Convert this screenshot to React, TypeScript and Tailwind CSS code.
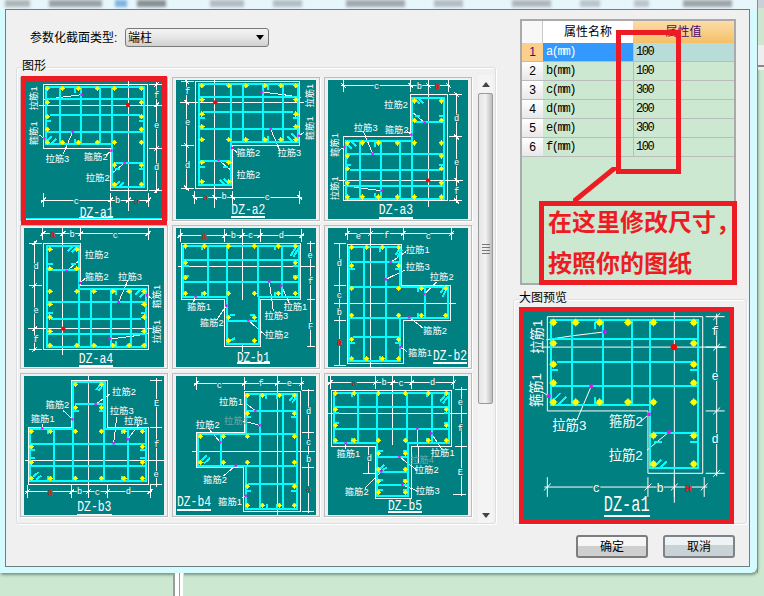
import React from "react";

type Lbl = [number, number, string, ("d" | "r" | "g" | "v")?];
type Geo = {
  outline: string;
  bars: string;
  yellow: [number, number[]][];
  mag: [number, number][];
  red?: [number, number];
  lines: string;
};

const hDim = (y: number, xs: number[]) =>
  `M${xs[0] - 6} ${y}H${xs[xs.length - 1] + 6}` +
  xs.map((x) => `M${x} ${y - 20}V${y + 20}M${x - 7} ${y + 7}L${x + 7} ${y - 7}`).join("");
const vDim = (x: number, ys: number[]) =>
  `M${x} ${ys[0] - 6}V${ys[ys.length - 1] + 6}` +
  ys.map((y) => `M${x - 22} ${y}H${x + 16}M${x - 7} ${y + 7}L${x + 7} ${y - 7}`).join("");

const L: Geo = {
  outline: "M130 253H442V572H332V445H130Z",
  bars:
    "M137 260H432V562H337V433H137ZM137 298H432M150 345H420M137 395H432M345 490H432M180 260V433M242 262V433M300 260V433M337 260V433" +
    "M226 278V266Q226 262 240 262M137 362H152M432 362H416M226 416V430H240M432 508H416M345 508H360M140 425L156 409M152 433L168 417M345 558L359 544M356 561L370 547",
  yellow: [
    [265, [142, 187, 235, 292, 343, 424]],
    [307, [142, 424]],
    [350, [142, 424]],
    [388, [142, 424]],
    [427, [142, 187, 235, 292, 343, 424]],
    [495, [343, 424]],
    [553, [343, 424]],
  ],
  mag: [[245, 284], [218, 395], [133, 415], [334, 452], [374, 488]],
  red: [384, 315],
  lines:
    "M385 235V632M118 315H490" +
    hDim(600, [130, 332, 385, 445]) +
    vDim(470, [253, 315, 445, 572]) +
    "M245 284L180 292L128 300M218 395L190 462M133 415L118 405M334 452L318 466M374 488L330 525",
};

const B1: Geo = {
  outline: "M545 55H902V222H782V364H673V222H545Z",
  bars:
    "M550 62H897V215H777V357H680V215H550ZM550 105H897M550 170H897M685 287H772M624 62V215M680 62V215M775 62V215M845 62V215" +
    "M605 62V76M825 62V76M550 122H566M550 152H566M880 122H897M880 152H897M605 200V215M825 200V215M690 270H705M750 270H765M872 92L888 66M880 95L896 70M685 350L705 340",
  yellow: [
    [63, [556, 613, 685, 763, 835, 886]],
    [113, [556, 886]],
    [158, [556, 886]],
    [205, [556, 613, 685, 763, 835, 886]],
    [277, [685, 763]],
    [347, [685, 763]],
  ],
  mag: [[587, 214], [679, 242], [745, 286], [808, 170], [844, 182]],
  lines:
    "M726 15V225M726 355V380M535 123H945" +
    hDim(32, [540, 674, 726, 780, 905]) +
    "M932 48V365M920 55H945M920 123H945M920 222H945M920 365H945" +
    "M587 214L580 232M679 242L650 285M745 286L795 330M808 170L820 258M844 182L868 235",
};

const B2: Geo = {
  outline: "M82 524H245V645H392V750H250V880H82Z",
  bars:
    "M88 530H240V650H385V745H240V874H88ZM88 577H240M88 650H240M88 743H240M100 800H240M132 530V874M198 530V874M315 650V745" +
    "M180 532V545M88 597H105M225 597H240M180 858V872M295 652V665M295 730V743M88 820H105M225 820H240M226 555L240 535M232 560L246 540M368 680L382 652M362 668L376 648",
  yellow: [
    [532, [95, 140, 187, 236]],
    [587, [95, 236]],
    [655, [95, 236, 304, 377]],
    [736, [95, 236, 304, 377]],
    [808, [95, 236]],
    [866, [95, 140, 187, 236]],
  ],
  mag: [[212, 577], [197, 628], [313, 673], [268, 742], [241, 832]],
  lines:
    "M151 474V890M44 700H408" +
    hDim(490, [82, 152, 250, 395]) +
    "M59 520V885M42 520H78M42 645H78M42 700H78M42 750H78M42 885H78" +
    "M212 577L258 545M197 628L255 600M313 673L350 635M268 742L310 775M241 832L262 845",
};

const B3: Geo = {
  outline: "M215 31H322V172H445V343H85V172H215Z",
  bars:
    "M220 37H316V177H437V332H90V177H220ZM225 103H316M90 222H437M90 287H437M163 177V332M218 177V332M312 37V332M383 177V332" +
    "M222 122H238M296 122H312M145 179V192M365 179V192M90 240H106M420 240H437M90 265H106M420 265H437M145 318V332M365 318V332M288 60L304 40M296 62L312 42M100 320L116 306M108 330L124 316",
  yellow: [
    [43, [226, 304]],
    [113, [226, 304]],
    [184, [94, 151, 226, 304, 372, 427]],
    [230, [94, 427]],
    [277, [94, 427]],
    [325, [94, 151, 226, 304, 372, 427]],
  ],
  mag: [[127, 175], [217, 148], [287, 103], [341, 220], [383, 208]],
  lines:
    "M265 18V385M75 271H492" +
    hDim(365, [82, 215, 265, 322, 450]) +
    "M470 24V350M450 31H486M450 172H486M450 271H486M450 343H486" +
    "M127 175L127 163M217 148L190 122M287 103L330 72M341 220L350 142M383 208L415 165",
};

const B4: Geo = {
  outline: "M732 65H900V424H730V293H590V187H732Z",
  bars:
    "M737 72H892V416H737V288H595V192H737ZM737 122H892M737 192H892M737 288H892M745 342H892M662 192V288M780 72V416M850 72V416" +
    "M797 72V88M832 72V88M737 142H752M874 142H892M800 402V416M830 402V416M874 362H892M737 362H752M868 92L886 72M876 98L892 80M605 270L620 256M612 280L630 264",
  yellow: [
    [76, [742, 787, 838, 883]],
    [130, [742, 883]],
    [199, [601, 670, 742, 883]],
    [277, [601, 670, 742, 883]],
    [349, [742, 883]],
    [406, [742, 787, 838, 883]],
  ],
  mag: [[766, 122], [779, 166], [661, 217], [707, 287], [737, 377]],
  lines:
    "M832 18V435M577 243H945" +
    hDim(40, [588, 732, 832, 905]) +
    "M925 56V430M906 62H942M906 187H942M906 243H942M906 293H942M906 425H942" +
    "M766 122L735 98M779 166L730 153M661 217L625 175M707 287L670 318M737 377L725 385",
};

const B5: Geo = {
  outline: "M35 62H395V228H275V385H166V228H35Z",
  bars:
    "M42 68H388V220H265V378H172V220H42ZM42 110H388M42 176H388M175 260H260M175 305H260M175 344H260M113 68V220M170 68V220M262 68V220M335 68V220" +
    "M95 68V82M320 68V82M42 128H58M372 128H388M42 158H58M372 158H388M95 205V220M320 205V220M175 244H190M248 244H262M175 330H190M248 330H262M175 360H190M248 360H262M360 95L380 70M368 100L386 78M180 296L192 284M188 300L200 292",
  yellow: [
    [70, [46, 102, 175, 256, 325, 379]],
    [118, [46, 379]],
    [166, [46, 379]],
    [211, [46, 102, 175, 256, 325, 379]],
    [250, [175, 256]],
    [298, [175, 256]],
    [334, [175, 256]],
    [367, [175, 256]],
  ],
  mag: [[77, 220], [184, 304], [238, 260], [292, 176], [334, 190], [247, 344]],
  lines:
    "M218 18V225M25 130H442" +
    hDim(38, [30, 166, 218, 275, 400]) +
    "M424 52V378M404 58H440M404 130H440M404 228H440M400 372H438M146 230V312M130 230H165M130 310H165" +
    "M77 220L77 238M184 304L135 355M238 260L290 300M292 176L296 280M334 190L365 238M247 344L290 362",
};

const stroke = { vectorEffect: "non-scaling-stroke" as const, shapeRendering: "crispEdges" as const, fill: "none" };

function Geometry({ g, t }: { g: Geo; t?: string }) {
  return (
    <g transform={t}>
      <path d={g.lines} stroke="#ffffff" strokeWidth={1} {...stroke} />
      <path d={g.outline} stroke="#ffffff" strokeWidth={1} {...stroke} />
      <path d={g.bars} stroke="#00ffff" strokeWidth={2} {...stroke} />
      {g.yellow.flatMap(([y, xs]) =>
        xs.map((x) => (
          <g key={`${x}-${y}`}>
            <circle cx={x} cy={y} r={6} fill="#ffff00" />
            <path d={`M${x - 8} ${y}H${x + 8}M${x} ${y - 8}V${y + 8}`} stroke="#ffff00" strokeWidth={1} {...stroke} />
          </g>
        ))
      )}
      {g.mag.map(([x, y]) => (
        <rect key={`${x}-${y}`} x={x - 3.5} y={y - 3.5} width={7} height={7} fill="#ff00ff" />
      ))}
      {g.red && <circle cx={g.red[0]} cy={g.red[1]} r={6.5} fill="#ff0000" />}
    </g>
  );
}

function Diagram({
  vb,
  geo,
  t,
  labels,
  title,
  size = 28,
  letter = 26,
  titleFont = 46,
  extra,
  className,
}: {
  vb: string;
  geo: Geo;
  t?: string;
  labels: Lbl[];
  title: [string, number, number, number, number, number];
  size?: number;
  letter?: number;
  titleFont?: number;
  extra?: React.ReactNode;
  className: string;
}) {
  const [name, cx, cy, u0, u1, uy] = title;
  const sx = (u1 - u0) / (titleFont * 3.0);
  return (
    <svg viewBox={vb} preserveAspectRatio="none" className={`block bg-[#008080] ${className}`}>
      <Geometry g={geo} t={t} />
      {labels.map(([x, y, s, k], i) => {
        const isDim = k === "d" || k === "r";
        const rotate = k === "v" ? `rotate(-90 ${x} ${y})` : undefined;
        return (
          <text
            key={i}
            x={x}
            y={y}
            transform={rotate}
            textAnchor="middle"
            dominantBaseline="central"
            fontSize={isDim ? letter : size}
            fill={k === "r" ? "#ff0000" : k === "g" ? "#6fa8a8" : "#ffffff"}
            stroke={isDim ? "#008080" : "none"}
            strokeWidth={isDim ? 6 : 0}
            paintOrder="stroke"
            className={
              isDim
                ? "font-['Liberation_Mono',monospace]"
                : "font-['Liberation_Sans','Noto_Sans_CJK_SC',sans-serif]"
            }
          >
            {s}
          </text>
        );
      })}
      <text
        transform={`translate(${cx} ${cy}) scale(${sx} 1)`}
        textAnchor="middle"
        dominantBaseline="central"
        fontSize={titleFont}
        fill="#ffffff"
        className="font-['Liberation_Mono',monospace]"
      >
        {name}
      </text>
      <path d={`M${u0} ${uy}H${u1}`} stroke="#ffffff" strokeWidth={2} {...stroke} />
      {extra}
    </svg>
  );
}

const thumb = "w-[140px] h-[139px]";
const cells: React.ComponentProps<typeof Diagram>[] = [
  {
    vb: "72 240 420 417",
    geo: L,
    className: thumb,
    title: ["DZ-a1", 290, 638, 238, 340, 655],
    extra: <path d="M78 656H486" stroke="#00ffff" strokeWidth={1} {...stroke} />,
    labels: [
      [103, 295, "拉筋1", "v"], [103, 400, "箍筋1", "v"], [172, 476, "拉筋3"], [287, 470, "箍筋2"], [293, 535, "拉筋2"],
      [470, 288, "f", "d"], [470, 378, "e", "d"], [470, 505, "d", "d"], [229, 605, "c", "d"], [353, 603, "b", "d"], [410, 605, "a", "r"],
    ],
  },
  {
    vb: "528 243 420 417",
    geo: L,
    t: "translate(1030,-5) scale(-1,1)",
    className: thumb,
    title: ["DZ-a2", 745, 632, 693, 795, 654],
    labels: [
      [930, 290, "拉筋1", "v"], [930, 388, "箍筋1", "v"], [745, 461, "箍筋2"], [868, 461, "拉筋3"], [745, 527, "拉筋2"],
      [563, 280, "f", "d"], [563, 372, "e", "d"], [563, 500, "d", "d"], [617, 598, "a", "r"], [672, 595, "b", "d"], [802, 597, "c", "d"],
    ],
  },
  {
    vb: "24 30 420 417",
    geo: L,
    t: "translate(-60,646) scale(1,-1)",
    className: thumb,
    title: ["DZ-a3", 228, 421, 177, 280, 443],
    labels: [
      [228, 105, "拉筋2"], [230, 180, "箍筋2"], [137, 175, "拉筋3"], [45, 225, "箍筋1", "v"], [45, 355, "拉筋1", "v"],
      [170, 52, "c", "d"], [298, 52, "b", "d"], [352, 50, "a", "r"], [410, 147, "d", "d"], [410, 280, "e", "d"], [410, 367, "f", "d"],
    ],
  },
  {
    vb: "72 9 420 417",
    geo: L,
    t: "translate(574,626) scale(-1,-1)",
    className: thumb,
    title: ["DZ-a4", 288, 401, 237, 340, 423],
    labels: [
      [290, 90, "拉筋2"], [290, 155, "箍筋2"], [390, 155, "拉筋3"], [470, 215, "箍筋1", "v"], [470, 320, "拉筋1", "v"],
      [158, 30, "a", "r"], [216, 31, "b", "d"], [346, 32, "c", "d"], [108, 125, "d", "d"], [108, 258, "e", "d"], [108, 345, "f", "d"],
    ],
  },
  {
    vb: "528 9 420 417",
    geo: B1,
    className: thumb,
    title: ["DZ-b1", 760, 398, 712, 810, 414],
    labels: [
      [597, 245, "箍筋1"], [635, 293, "箍筋2"], [829, 272, "拉筋3"], [830, 331, "拉筋2"], [886, 245, "拉筋1"],
      [612, 35, "a", "r"], [700, 33, "b", "d"], [752, 33, "c", "d"], [844, 33, "d", "d"], [930, 93, "e", "d"], [932, 172, "f", "d"], [932, 305, "F", "d"],
    ],
  },
  {
    vb: "24 474 420 417",
    geo: B2,
    className: thumb,
    title: ["DZ-b2", 390, 858, 340, 442, 878],
    labels: [
      [293, 540, "拉筋1"], [293, 592, "拉筋3"], [365, 620, "拉筋2"], [345, 782, "箍筋2"], [300, 848, "箍筋1"],
      [115, 500, "e", "d"], [200, 497, "f", "d"], [325, 502, "c", "d"], [58, 582, "d", "d"], [58, 678, "c", "d"], [58, 730, "b", "d"], [58, 818, "a", "r"],
    ],
  },
  {
    vb: "72 18 420 417",
    geo: B3,
    className: thumb,
    title: ["DZ-b3", 283, 411, 232, 335, 434],
    labels: [
      [128, 147, "箍筋1"], [172, 104, "箍筋2"], [372, 66, "拉筋2"], [365, 122, "拉筋3"], [408, 152, "拉筋1"],
      [150, 369, "a", "r"], [239, 367, "b", "d"], [292, 369, "c", "d"], [385, 367, "d", "d"], [470, 103, "E", "d"], [470, 225, "f", "d"], [468, 316, "e", "d"],
    ],
  },
  {
    vb: "528 18 420 417",
    geo: B4,
    className: thumb,
    title: ["DZ-b4", 582, 396, 532, 634, 420],
    labels: [
      [693, 96, "拉筋1"], [708, 153, "拉筋3", "g"], [623, 164, "拉筋2"], [645, 329, "箍筋2"], [690, 395, "箍筋1"],
      [658, 47, "c", "d"], [783, 41, "f", "d"], [868, 41, "e", "d"], [926, 125, "d", "d"], [926, 220, "c", "d"], [926, 270, "b", "d"], [925, 360, "a", "r"],
    ],
  },
  {
    vb: "24 18 420 417",
    geo: B5,
    className: thumb,
    title: ["DZ-b5", 255, 407, 204, 306, 426],
    labels: [
      [85, 251, "箍筋1"], [110, 367, "箍筋2"], [306, 270, "拉筋4", "g"], [320, 301, "拉筋2"], [323, 362, "拉筋3"], [368, 250, "拉筋1"],
      [102, 41, "a", "r"], [192, 40, "b", "d"], [243, 41, "c", "d"], [338, 38, "d", "d"], [421, 98, "e", "d"], [421, 178, "f", "d"], [421, 310, "E", "d"], [148, 268, "d", "d"],
    ],
  },
];

const blobs: [number, number, string][] = [
  [5, 25, "#aeb6ba"], [19, 53, "#9aa2a6"], [13, 12, "#7db4e0"], [10, 29, "#8a9094"], [44, 34, "#b4bcc2"], [29, 29, "#b4bec6"],
  [44, 59, "#a2a8ae"], [29, 29, "#b4bcc4"], [49, 39, "#b0b6bc"], [29, 20, "#bcc4ca"], [34, 15, "#bcc4ca"], [34, 49, "#a0a6aa"],
];

const rows: [string, string][] = [
  ["b(mm)", "100"], ["c(mm)", "300"], ["d(mm)", "200"], ["e(mm)", "300"], ["f(mm)", "100"],
];

const mono = "font-['Liberation_Mono','Noto_Sans_CJK_SC',monospace] text-[12px] tracking-[-1.4px]";

function GroupBox({ label, className, children }: { label: string; className: string; children: React.ReactNode }) {
  return (
    <div className={`relative rounded-[3px] border border-[#d9e0e5] shadow-[inset_1px_1px_0_#ffffff,1px_1px_0_#ffffff] ${className}`}>
      <span className="absolute left-[5px] -top-[9px] bg-[#f0f0f0] pr-px text-[12px] leading-[14px] text-black">{label}</span>
      {children}
    </div>
  );
}

export default function App() {
  return (
    <div className="flex h-[596px] w-[764px] flex-col overflow-hidden bg-[#cde8d0] font-['Liberation_Sans','Noto_Sans_CJK_SC',sans-serif] text-black">
      <div className="flex h-[573px] w-[764px]">
        {/* window frame */}
        <div className="flex h-[573px] w-[757px] flex-col rounded-br-[6px] bg-[#d4fbff] pb-[6px] pl-[5px] pr-[7px] shadow-[1px_2px_3px_rgba(60,80,60,0.55)]">
          <div className="-ml-[5px] -mr-[7px] flex h-[9px] shrink-0 overflow-hidden bg-[#e6f6fb]">
            {blobs.map(([gap, w, c], i) => (
              <React.Fragment key={i}>
                <div className="shrink-0" style={{ width: gap }} />
                <div className="h-[7px] shrink-0 blur-[1.5px]" style={{ width: w, backgroundColor: c }} />
              </React.Fragment>
            ))}
          </div>
          {/* client area */}
          <div className="flex min-h-0 flex-1 border border-[#6f7f7f] bg-[#f0f0f0]">
            {/* left column */}
            <div className="ml-[10px] flex w-[480px] shrink-0 flex-col">
              <div className="ml-[14px] mt-[18px] flex h-[19px] items-center">
                <span className="w-[95px] text-[12px]">参数化截面类型:</span>
                <div className="flex h-[19px] w-[144px] items-center justify-between rounded-[3px] border border-[#7a7a7a] bg-gradient-to-b from-[#f4f4f4] via-[#e6e6e6] to-[#cfcfcf] pl-[2px] pr-[4px] text-[12px]">
                  <span>端柱</span>
                  <svg viewBox="0 0 8 5" className="h-[5px] w-[8px]"><path d="M0 0H8L4 5Z" fill="#000" /></svg>
                </div>
              </div>
              <GroupBox label="图形" className="mt-[20px] h-[457px] w-[480px]">
                <div className="flex items-start pl-[3px] pt-[9px]">
                  <div className="grid w-[452px] grid-cols-[148px_148px_148px] gap-[4px]">
                    {cells.map((c, i) => (
                      <div key={i} className="relative h-[144px] border border-[#bcbcbc] bg-[#f0f0f0] pb-px pl-[3px] pr-[3px] pt-[2px] shadow-[1px_1px_0_#ffffff]">
                        <Diagram {...c} />
                        {i === 0 && (
                          <div className="absolute -top-[2px] left-0 h-[149px] w-[146px] border-[5px] border-[#ed1c24]" />
                        )}
                      </div>
                    ))}
                  </div>
                  <div className="-mt-[2px] ml-[6px] flex h-[448px] w-[15px] flex-col bg-[#f4f4f4]">
                    <div className="flex h-[18px] items-center justify-center">
                      <svg viewBox="0 0 8 5" className="h-[5px] w-[8px]"><path d="M0 5H8L4 0Z" fill="#444" /></svg>
                    </div>
                    <div className="flex h-[311px] flex-col items-center justify-center gap-[2px] rounded-[2px] border border-[#9a9a9a] bg-gradient-to-r from-[#e4e4e4] via-[#f2f2f2] to-[#bcbcbc]">
                      <div className="h-px w-[8px] bg-[#777]" />
                      <div className="h-px w-[8px] bg-[#777]" />
                      <div className="h-px w-[8px] bg-[#777]" />
                      <div className="h-px w-[8px] bg-[#777]" />
                    </div>
                    <div className="flex-1" />
                    <div className="flex h-[16px] items-center justify-center">
                      <svg viewBox="0 0 8 5" className="h-[5px] w-[8px]"><path d="M0 0H8L4 5Z" fill="#444" /></svg>
                    </div>
                  </div>
                </div>
              </GroupBox>
            </div>

            {/* right column */}
            <div className="ml-[17px] flex w-[234px] shrink-0 flex-col">
              <div className="relative ml-[7px] mt-[9px] h-[266px] w-[216px] border-2 border-[#aaaaaa] bg-[#cde8d0]">
                <div className="grid grid-cols-[21px_90px_101px] grid-rows-[22px_19px_19px_19px_19px_19px_19px] text-[12px]">
                  <div className="border-r border-[#c8c8c8] bg-[#f8f8f8]" />
                  <div className="flex items-center justify-center bg-white">属性名称</div>
                  <div className="flex items-center justify-center bg-gradient-to-b from-[#fcdca8] to-[#f4c064] text-[#4b0a6e]">属性值</div>
                  <div className="flex items-center justify-center border-b border-[#bbbbbb] bg-[#fcd08c] text-[#4b0a6e]">1</div>
                  <div className="flex items-center border-b border-[#bbbbbb] bg-[#3399ff] pl-[3px] text-white"><span className={mono}>a(mm)</span></div>
                  <div className="flex items-center border-b border-l border-[#bbbbbb] bg-[#b8ddd8] pl-[2px]"><span className={mono}>100</span></div>
                  {rows.map(([name, value], i) => (
                    <React.Fragment key={name}>
                      <div className="flex items-center justify-center border-b border-[#bbbbbb] bg-gradient-to-b from-white to-[#e8e8e8]">{i + 2}</div>
                      <div className="flex items-center border-b border-[#bbbbbb] pl-[3px]"><span className={mono}>{name}</span></div>
                      <div className="flex items-center border-b border-l border-[#bbbbbb] pl-[2px]"><span className={mono}>{value}</span></div>
                    </React.Fragment>
                  ))}
                </div>
                {/* red annotations */}
                <div className="absolute left-[94px] top-[9px] h-[144px] w-[65px] border-[5px] border-[#ed1c24]" />
                <svg viewBox="0 0 43 35" className="absolute left-[51px] top-[146px] h-[35px] w-[43px]">
                  <path d="M43 0L0 35" stroke="#ed1c24" strokeWidth={5} fill="none" />
                </svg>
                <div className="absolute left-[17px] top-[180px] h-[84px] w-[198px] border-[5px] border-[#ed1c24] pl-[4px]">
                  <div className="-mt-[4px] whitespace-nowrap text-[24px] font-bold leading-[41px] text-[#ed1c24]">
                    在这里修改尺寸，
                    <br />
                    按照你的图纸
                  </div>
                </div>
              </div>

              <GroupBox label="大图预览" className="mt-[14px] h-[225px] w-[234px]">
                <div className="ml-[5px] mt-[7px] w-fit border-[5px] border-[#ed1c24]">
                  <Diagram
                    vb="42 66 615 621"
                    geo={L}
                    t="translate(-82.2,-292.7) scale(1.494,1.473)"
                    className="h-[207px] w-[205px]"
                    size={40}
                    letter={36}
                    titleFont={64}
                    title={["DZ-a1", 350, 647, 282, 420, 678]}
                    labels={[
                      [82, 140, "拉筋1", "v"], [78, 300, "箍筋1", "v"], [178, 405, "拉筋3"], [348, 395, "箍筋2"], [347, 497, "拉筋2"],
                      [615, 125, "f", "d"], [615, 260, "e", "d"], [615, 450, "d", "d"], [259, 596, "c", "d"], [450, 596, "b", "d"], [535, 596, "a", "r"],
                    ]}
                  />
                </div>
              </GroupBox>

              <div className="mt-[11px] flex justify-end gap-[15px] pr-[12px]">
                <button className="h-[23px] w-[72px] rounded-[3px] border-2 border-[#7d7d7d] bg-gradient-to-b from-[#f6f6f6] from-50% to-[#cfcfcf] to-50% text-[12px] text-black">确定</button>
                <button className="h-[23px] w-[72px] rounded-[3px] border-2 border-[#7d8488] bg-gradient-to-b from-[#eef3f5] from-40% to-[#c9d2d6] to-40% text-[12px] text-black">取消</button>
              </div>
            </div>
          </div>
        </div>

        {/* neighbouring window sliver */}
        <div className="flex w-[7px] flex-col border-l border-[#8a8a8a]">
          <div className="h-[8px] bg-[#c8d0d8]" />
          <div className="h-[37px] bg-[#cfe5cf]" />
          <div className="h-[20px] bg-[#eeeeee]" />
          <div className="h-[2px] bg-[#888888]" />
          <div className="h-[3px] bg-[#eeeeee]" />
          <div className="flex-1" />
        </div>
      </div>
      {/* background column lines under the dialog */}
      <div className="ml-[173px] flex h-[23px] w-[11px]">
        <div className="w-[2px] bg-[#9c9c9c]" />
        <div className="w-[4px] bg-white" />
        <div className="w-[1px] bg-[#9c9c9c]" />
        <div className="w-[3px] bg-white" />
        <div className="w-[1px] bg-[#dddddd]" />
      </div>
    </div>
  );
}
